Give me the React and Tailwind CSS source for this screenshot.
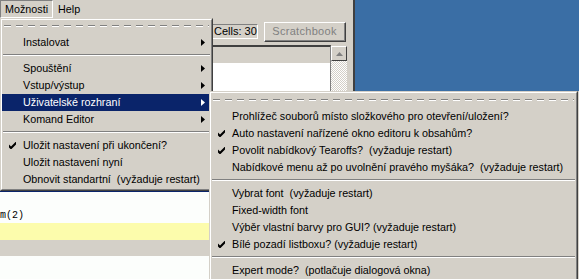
import React from 'react';

const FONT = { fontFamily: '"Liberation Sans", Arial, sans-serif' };

function Check({ white }) {
  return (
    <svg width="7" height="7" viewBox="0 0 7 7" className="block">
      <path d="M0 2.5 L2 4.5 L7 -0.5 V2.5 L2 7.5 L0 5.5 Z" fill={white ? '#fff' : '#000'} />
    </svg>
  );
}

function Arrow({ white }) {
  return (
    <svg width="4" height="7" viewBox="0 0 4 7" className="block">
      <polygon points="0,0 4,3.5 0,7" fill={white ? '#fff' : '#000'} />
    </svg>
  );
}

function Tearoff({ h, pt }) {
  return (
    <div className="px-[2px]" style={{ height: h, paddingTop: pt }}>
      <div className="h-px bg-[repeating-linear-gradient(90deg,#808080_0_7px,transparent_7px_12px)]" />
      <div className="h-px bg-[repeating-linear-gradient(90deg,#ffffff_0_7px,transparent_7px_12px)]" />
    </div>
  );
}

function Separator() {
  return (
    <div className="h-[9px] pt-[3px] px-[1px]">
      <div className="h-px bg-[#808080]" />
      <div className="h-px bg-white" />
    </div>
  );
}

function Item({ label, checked, sub, active }) {
  return (
    <div
      className={`relative flex items-center h-[17px] leading-[17px] pl-[21px] pr-[6px] whitespace-pre ${
        active ? 'bg-[#0a246a] text-white' : 'text-black'
      }`}
    >
      {checked && (
        <span className="absolute left-[7px] top-[5px]">
          <Check white={active} />
        </span>
      )}
      <span className="flex-1">{label}</span>
      {sub && <Arrow white={active} />}
    </div>
  );
}

function Menu({ className, tearH, tearPt, children }) {
  return (
    <div
      className={`absolute bg-[#d4d0c8] border border-t-[#d4d0c8] border-l-[#d4d0c8] border-r-[#404040] border-b-[#404040] ${className}`}
    >
      <div className="border border-t-white border-l-white border-r-[#808080] border-b-[#808080]">
        <Tearoff h={tearH} pt={tearPt} />
        {children}
      </div>
    </div>
  );
}

export default function App() {
  return (
    <div className="relative w-[579px] h-[279px] overflow-hidden bg-[#d4d0c8] text-[10.75px]" style={FONT}>
      {/* okno v pozadí */}
      <div className="flex h-[91px]">
        <div className="w-[353px] flex flex-col">
          <div className="flex h-[18px] items-center">
            <div className="h-[18px] w-[53px] px-[4px] flex items-center border border-t-[#808080] border-l-[#808080] border-r-white border-b-white">
              Možnosti
            </div>
            <div className="px-[5px]">Help</div>
          </div>
          <div className="flex items-start pl-[212px] pt-[4px]">
            <div className="mt-[2px] h-[15px] w-[46px] overflow-hidden whitespace-nowrap flex items-center border border-t-[#808080] border-l-[#808080] border-r-white border-b-white leading-none pl-[1px] text-[11px]">
              Cells: 30
            </div>
            <div className="ml-[6px] w-[82px] h-[20px] border border-t-white border-l-white border-r-[#404040] border-b-[#404040]">
              <div className="h-full flex items-center justify-center border-r border-b border-[#808080] text-[#808080] text-[11px] tracking-[0.3px]">
                Scratchbook
              </div>
            </div>
          </div>
          <div className="flex pl-[212px] pt-[3px] flex-1">
            <div className="w-[119px] flex flex-col border-t-2 border-t-[#404040] border-r border-r-[#808080] bg-white">
              <div className="h-[16px] bg-[#d4d0c8]" />
              <div className="flex-1 bg-white" />
            </div>
            <div className="w-[16px] flex flex-col pt-[1px]">
              <div className="h-[15px] bg-[#d4d0c8] border border-t-white border-l-white border-r-[#404040] border-b-[#404040] flex items-center justify-center">
                <svg width="7" height="4" viewBox="0 0 7 4" className="block">
                  <polygon points="3.5,0 7,4 0,4" fill="#808080" />
                </svg>
              </div>
              <div className="flex-1 bg-[repeating-conic-gradient(#ffffff_0_25%,#d4d0c8_0_50%)] bg-[length:2px_2px]" />
            </div>
          </div>
        </div>
        <div className="w-[2px] bg-[#404040]" />
        <div className="flex-1 bg-[#3a6ea5]" />
      </div>

      <div className="h-[99px]" />

      {/* editor */}
      <div className="w-[209px] border-t-2 border-t-[#0a246a]">
        <div className="h-[15px] bg-[#fcfefc]" />
        <div
          className="h-[16px] leading-[18px] bg-[#fcfefc] text-[10px] text-black"
          style={{ fontFamily: '"Liberation Mono", "Courier New", monospace' }}
        >
          m(2)
        </div>
        <div className="h-[17px] bg-[#fcfcac]" />
        <div className="h-[16px] bg-[#d4d0c8]" />
        <div className="h-[30px] bg-[#fcfefc]" />
      </div>

      {/* hlavní menu */}
      <Menu className="left-0 top-[18px] w-[213px]" tearH={14} tearPt={5}>
        <Item label="Instalovat" sub />
        <Separator />
        <Item label="Spouštění" sub />
        <Item label="Vstup/výstup" sub />
        <Item label="Uživatelské rozhraní" sub active />
        <Item label="Komand Editor" sub />
        <Separator />
        <Item label="Uložit nastavení při ukončení?" checked />
        <Item label="Uložit nastavení nyní" />
        <Item label="Obnovit standartní  (vyžaduje restart)" />
        <div className="h-[1px]" />
      </Menu>

      {/* podmenu */}
      <Menu className="left-[209px] top-[91px] w-[369px]" tearH={15} tearPt={6}>
        <Item label="Prohlížeč souborů místo složkového pro otevření/uložení?" />
        <Item label="Auto nastavení nařízené okno editoru k obsahům?" checked />
        <Item label="Povolit nabídkový Tearoffs?  (vyžaduje restart)" checked />
        <Item label="Nabídkové menu až po uvolnění pravého myšáka?  (vyžaduje restart)" />
        <Separator />
        <Item label="Vybrat font  (vyžaduje restart)" />
        <Item label="Fixed-width font" />
        <Item label="Výběr vlastní barvy pro GUI? (vyžaduje restart)" />
        <Item label="Bílé pozadí listboxu? (vyžaduje restart)" checked />
        <Separator />
        <Item label="Expert mode?  (potlačuje dialogová okna)" />
        <div className="h-[10px]" />
      </Menu>
    </div>
  );
}
